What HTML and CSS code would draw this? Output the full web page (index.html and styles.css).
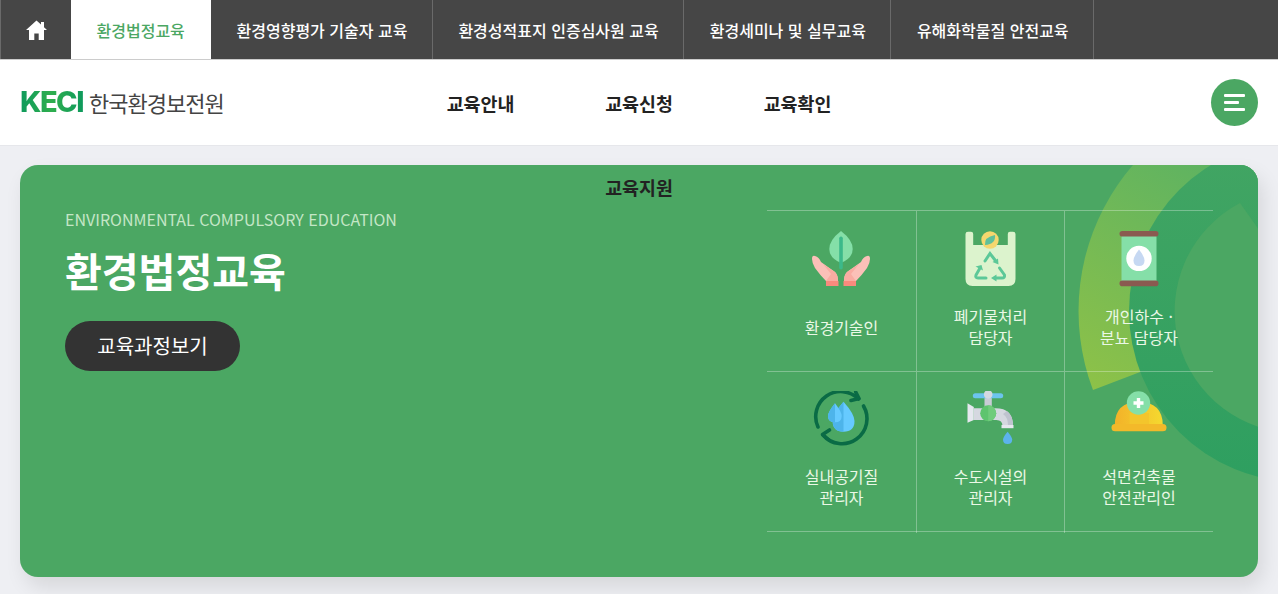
FILE: index.html
```html
<!DOCTYPE html>
<html lang="ko">
<head>
  <meta charset="UTF-8">
  <meta name="viewport" content="width=device-width, initial-scale=1.0">
  <title>환경법정교육</title>
  <link rel="stylesheet" href="styles.css">
</head>
<body>
  <div class="top-bar">
    <a class="tab tab-home" href="#">
      <svg width="21" height="20" viewBox="0 0 21 20"><path d="M10.5 0.5 L15 4.6 L15 2 L18 2 L18 7.3 L21 10 L18 10 L18 20 L12.7 20 L12.7 13.5 L8.3 13.5 L8.3 20 L3 20 L3 10 L0 10 Z" fill="#fff"/></svg>
    </a>
    <a class="tab active" href="#">환경법정교육</a>
    <a class="tab" href="#">환경영향평가 기술자 교육</a>
    <a class="tab" href="#">환경성적표지 인증심사원 교육</a>
    <a class="tab" href="#">환경세미나 및 실무교육</a>
    <a class="tab" href="#">유해화학물질 안전교육</a>
  </div>

  <header class="header">
    <a class="logo" href="#">
      <span class="logo-mark">KECI</span>
      <span class="logo-name">한국환경보전원</span>
    </a>
    <nav class="nav">
      <a href="#">교육안내</a>
      <a href="#">교육신청</a>
      <a href="#">교육확인</a>
      <a href="#">교육지원</a>
    </nav>
    <button class="menu-btn" aria-label="메뉴"><span></span><span></span><span></span></button>
  </header>

  <main class="hero">
    <!-- 배경 원 장식 -->
    <svg class="hero-bg" width="1238" height="412" viewBox="20 165 1238 412">
      <defs>
        <linearGradient id="arcGrad" x1="0" y1="1" x2="0.45" y2="0">
          <stop offset="0" stop-color="#8fc247"/>
          <stop offset="1" stop-color="#55b066"/>
        </linearGradient>
        <linearGradient id="ringGrad" x1="0" y1="0" x2="0" y2="1">
          <stop offset="0" stop-color="#42a563"/>
          <stop offset="1" stop-color="#2e9f60"/>
        </linearGradient>
      </defs>
      <path d="M1093 390 A223 223 0 0 1 1300 88 L1300 311 Z" fill="url(#arcGrad)"/>
      <circle cx="1300" cy="311" r="171" fill="url(#ringGrad)"/>
      <path d="M1240 203 A122 122 0 0 0 1300 433 L1300 288 Z" fill="#4ba763"/>
    </svg>

    <div class="hero-text">
      <p class="hero-sub">ENVIRONMENTAL COMPULSORY EDUCATION</p>
      <h1>환경법정교육</h1>
      <a class="hero-btn" href="#">교육과정보기</a>
    </div>

    <div class="course-grid">
      <a class="course" href="#">
        <svg class="course-icon shift" viewBox="0 0 60 60">
          <path d="M30 0 Q41.7 9 41.7 18 Q41.7 27 30 32 Q18.3 27 18.3 18 Q18.3 9 30 0Z" fill="#85dfa8"/>
          <rect x="28.2" y="5.5" width="3.6" height="33" rx="1.8" fill="#3cb98a"/>
          <path d="M1 28 Q1 24 4 25 Q8 26 10 31 L24 41 Q27 44 27 50 L15 50 Q9 44 4 37 Q1 32 1 28Z" fill="#fbc0b8"/>
          <path d="M59 28 Q59 24 56 25 Q52 26 50 31 L36 41 Q33 44 33 50 L45 50 Q51 44 56 37 Q59 32 59 28Z" fill="#fbc0b8"/>
          <path d="M12 33 L20 43 L15 50 L27 50 Q27 44 24 41Z" fill="#f9aca2"/>
          <path d="M48 33 L40 43 L45 50 L33 50 Q33 44 36 41Z" fill="#f9aca2"/>
          <rect x="15" y="50" width="12.5" height="5" fill="#f98a7d"/>
          <rect x="32.5" y="50" width="12.5" height="5" fill="#f98a7d"/>
        </svg>
        <span>환경기술인</span>
      </a>
      <a class="course" href="#">
        <svg class="course-icon shift" viewBox="0 0 60 60">
          <path d="M5.5 3 Q5.5 0.7 8 0.7 L11 0.7 Q13.2 0.7 13.2 3 L13.2 14 L47.8 14 L47.8 3 Q47.8 0.7 50 0.7 L53 0.7 Q55.5 0.7 55.5 3 L55.5 48 Q55.5 55 48.5 55 L12.5 55 Q5.5 55 5.5 48Z" fill="#dcf3cd"/>
          <circle cx="30" cy="9" r="8.7" fill="#f5d76e"/>
          <path d="M25 14 Q24 6 35 4 Q36 13 25 14Z" fill="#5fc09a"/>
          <g fill="none" stroke="#5cc898" stroke-width="3" stroke-linecap="round">
            <path d="M25 30 L30 22.5 L35 29"/>
            <path d="M39.5 37 L44.5 44 Q45 47 42 47 L36 47"/>
            <path d="M26 47 L18 47 Q15 47 16 44 L20 37"/>
          </g>
          <path d="M38 27.5 L32.5 31 L38.5 33.5Z M36.5 43.5 L36.5 50.5 L31 47Z M15.5 35.5 L21.5 34 L23 39.5Z" fill="#5cc898"/>
        </svg>
        <span>폐기물처리<br>담당자</span>
      </a>
      <a class="course" href="#">
        <svg class="course-icon" viewBox="0 0 60 60">
          <rect x="12.5" y="4" width="35" height="47" fill="#85dfa8"/>
          <rect x="10.5" y="0" width="39" height="5.6" rx="2.8" fill="#8a5a50"/>
          <rect x="10.5" y="49.6" width="39" height="5.6" rx="2.8" fill="#8a5a50"/>
          <circle cx="30" cy="27.4" r="12.7" fill="#fff"/>
          <path d="M30 18.5 Q35.5 25.5 35.5 29.5 Q35.5 35 30 35 Q24.5 35 24.5 29.5 Q24.5 25.5 30 18.5Z" fill="#c6d8f2"/>
        </svg>
        <span>개인하수 ·<br>분뇨 담당자</span>
      </a>
      <a class="course" href="#">
        <svg class="course-icon shift" viewBox="0 0 60 60">
          <g fill="none" stroke="#0a6b45" stroke-width="3.6" stroke-linecap="round" stroke-linejoin="round" transform="translate(-1 0)">
            <path d="M8 36 A25 25 0 0 1 48.5 8"/>
            <path d="M45.7 1 L49 7.5 L41 9.5"/>
            <path d="M53.5 15 A25 25 0 0 1 13 44"/>
            <path d="M19.5 39 L12.5 43.5 L19 49"/>
          </g>
          <path d="M32.5 10.7 Q43.5 23 43.5 30 Q43.5 40.7 32.5 40.7 Q21.7 40.7 21.7 30 Q21.7 23 32.5 10.7Z" fill="#66caff"/>
          <path d="M32.5 10.7 Q21.7 23 21.7 30 Q21.7 40.7 32.5 40.7Z" fill="#4db4ea"/>
          <path d="M24 12.3 Q30.7 21 30.7 25 Q30.7 31.3 24 31.3 Q17 31.3 17 25 Q17 21 24 12.3Z" fill="#66caff"/>
          <path d="M24 12.3 Q17 21 17 25 Q17 31.3 24 31.3Z" fill="#4db4ea"/>
        </svg>
        <span>실내공기질<br>관리자</span>
      </a>
      <a class="course" href="#">
        <svg class="course-icon shift" viewBox="0 0 60 60">
          <rect x="24.5" y="6" width="7.3" height="11" fill="#c9ccd6"/>
          <rect x="12.8" y="2.3" width="30.4" height="5" rx="2.5" fill="#6cc4ee"/>
          <circle cx="28.2" cy="3.4" r="4.3" fill="#d5d8e0"/>
          <path d="M35 17.3 Q53 17 53 35 L42.5 35 Q42.5 28.8 36 29 L14 29 L14 17.3Z" fill="#d5d8e0"/>
          <path d="M47 20 Q53 24 53 35 L48 35 Q48 26 43 23Z" fill="#bfc3cf"/>
          <path d="M7.5 12.3 L13.8 16 L13.8 29 L7.5 31.7Z" fill="#e6e8ef"/>
          <circle cx="28.2" cy="22.3" r="8" fill="#5ec46e"/>
          <path d="M28.2 14.3 A8 8 0 0 1 28.2 30.3Z" fill="#70cc7c"/>
          <rect x="41.5" y="34" width="12" height="3.2" fill="#e6e8ef"/>
          <path d="M47.6 40.7 Q52.2 46 52.2 48.5 Q52.2 53 47.6 53 Q43 53 43 48.5 Q43 46 47.6 40.7Z" fill="#5cb3ec"/>
        </svg>
        <span>수도시설의<br>관리자</span>
      </a>
      <a class="course" href="#">
        <svg class="course-icon" viewBox="0 0 60 60">
          <defs>
            <linearGradient id="hatGrad" x1="0" y1="0" x2="1" y2="0">
              <stop offset="0" stop-color="#f3b229"/>
              <stop offset="1" stop-color="#f5d92f"/>
            </linearGradient>
          </defs>
          <path d="M5.8 34 Q6 11 29.5 10.7 Q53.5 11 53.8 34Z" fill="url(#hatGrad)"/>
          <path d="M20.5 34 L20.5 22 L40 22 L40 34Z" fill="#f3c52c"/>
          <rect x="2.5" y="33" width="55" height="7.3" rx="3.6" fill="#f3b92a"/>
          <circle cx="29.5" cy="12" r="11.7" fill="#85dfa8"/>
          <path d="M27.8 7 H31.2 V10.3 H34.5 V13.7 H31.2 V17 H27.8 V13.7 H24.5 V10.3 H27.8Z" fill="#fff"/>
        </svg>
        <span>석면건축물<br>안전관리인</span>
      </a>
    </div>
  </main>
</body>
</html>
```

FILE: styles.css
```css
* { box-sizing: border-box; }
html, body { height: 100%; }
body {
  margin: 0;
  overflow: hidden;
  background: #eeeff3;
  font-family: "Noto Sans CJK KR", "Noto Sans", sans-serif;
  color: #222;
}
a { color: inherit; text-decoration: none; }

.top-bar {
  display: flex;
  height: 60px;
  background: #464646;
  border-bottom: 1px solid #ccc;
}
.tab {
  display: flex;
  align-items: center;
  padding: 0 24.5px 0 25.5px;
  font-size: 16px;
  font-weight: 500;
  color: #fff;
  border-right: 1px solid #6a6a6a;
}
.tab-home {
  width: 71px;
  padding: 0;
  justify-content: center;
  border-left: 1px solid #6a6a6a;
  border-right: 0;
}
.tab.active {
  width: 140px;
  background: #fff;
  color: #4ba763;
  border-right: 0;
}

.header {
  display: grid;
  grid-template-columns: 1fr 476px 1fr;
  align-items: center;
  height: 86px;
  padding: 0 20px;
  background: #fff;
  border-bottom: 1px solid #e6e7eb;
}
.logo { display: flex; align-items: center; gap: 6px; margin-top: -2px; }
.logo-mark {
  font-family: Inter, sans-serif;
  font-size: 29px;
  font-weight: 800;
  line-height: 1;
  letter-spacing: -1.5px;
  background: linear-gradient(90deg, #0e9a5c, #2fae4e 50%, #0e9a5c);
  -webkit-background-clip: text;
  background-clip: text;
  color: transparent;
}
.logo-name {
  font-size: 22px;
  letter-spacing: -1px;
  color: #444;
}

/* 메뉴가 줄바꿈되어 아래 배너 위로 넘어간다 */
.nav {
  position: relative;
  z-index: 2;
  display: flex;
  flex-wrap: wrap;
  justify-content: center;
  align-self: start;
  height: 85px;
}
.nav a {
  width: 158.5px;
  height: 84px;
  line-height: 86px;
  text-align: center;
  font-size: 18.4px;
  font-weight: 700;
  color: #222;
}
.menu-btn {
  justify-self: end;
  display: flex;
  flex-direction: column;
  justify-content: center;
  align-items: center;
  gap: 4px;
  width: 47px;
  height: 47px;
  padding: 0;
  border: none;
  border-radius: 50%;
  background: #4ba763;
}
.menu-btn span {
  width: 21px;
  height: 3px;
  border-radius: 1px;
  background: #fff;
}
.menu-btn span:nth-child(2) { width: 15px; margin-right: 6px; }

.hero {
  position: relative;
  display: flex;
  justify-content: space-between;
  height: 412px;
  margin: 19px 20px 0;
  padding: 45px 45px 0;
  overflow: hidden;
  border-radius: 18px;
  background: #4ba763;
  box-shadow: 5px 10px 20px rgba(0,0,0,0.1);
}
.hero-bg { position: absolute; left: 0; top: 0; }
.hero-text, .course-grid { position: relative; }
.hero-text { margin-top: -1px; }
.hero-sub {
  margin: 0;
  font-size: 16px;
  line-height: 20px;
  color: #c4e6c6;
}
.hero h1 {
  margin: 11px 0 0;
  font-size: 40px;
  font-weight: 700;
  line-height: 60px;
  color: #fff;
}
.hero-btn {
  display: inline-block;
  margin-top: 21px;
  width: 175px;
  height: 50px;
  line-height: 50px;
  text-align: center;
  border-radius: 25px;
  background: #333;
  color: #fff;
  font-size: 20px;
}

.course-grid {
  display: grid;
  grid-template-columns: 150px 148px 148px;
  grid-template-rows: 161px 161px;
  width: 446px;
  height: 322px;
  border-top: 1px solid rgba(255,255,255,0.3);
  border-bottom: 1px solid rgba(255,255,255,0.3);
}
.course {
  display: flex;
  flex-direction: column;
  align-items: center;
  padding-top: 19px;
  border-right: 1px solid rgba(255,255,255,0.3);
  color: #eaf8e6;
  font-size: 16px;
  line-height: 21px;
  text-align: center;
}
.course:nth-child(3n) { border-right: none; }
.course:nth-child(-n+3) { padding-top: 20px; border-bottom: 1px solid rgba(255,255,255,0.3); }
.course-icon { width: 60px; height: 60px; flex: none; }
.course-icon.shift { margin-left: -2px; }
.course span {
  display: flex;
  align-items: center;
  height: 42px;
  margin-top: 15px;
}
```
